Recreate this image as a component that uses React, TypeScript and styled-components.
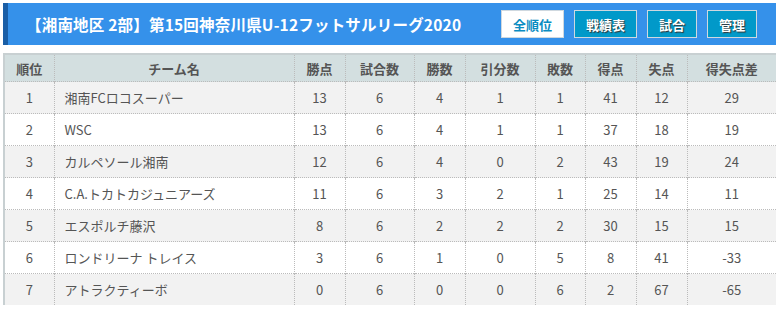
import { createGlobalStyle } from "styled-components";
import styled from "styled-components";

const GlobalStyle = createGlobalStyle`
  body {
    margin: 0;
    background: #fff;
    font-family: "Noto Sans CJK JP", "Noto Sans", sans-serif;
  }
`;

const Page = styled.div`
  padding: 3px 4px 0 3px;
`;

const Bar = styled.div`
  display: flex;
  align-items: center;
  justify-content: space-between;
  height: 42px;
  background: #3591ea;
  border-left: 5px solid #1a5ea6;
  padding: 0 19px 0 18px;
`;

const Title = styled.h1`
  margin: 0;
  color: #fff;
  font-size: 15.5px;
  font-weight: 700;
  letter-spacing: 0.2px;
`;

const Nav = styled.div`
  display: flex;
  gap: 10px;
`;

const NavButton = styled.a<{ $active?: boolean }>`
  display: flex;
  align-items: center;
  justify-content: center;
  height: 28px;
  padding: 0 11px;
  box-sizing: border-box;
  border: 1px solid #cfd8df;
  background: ${({ $active }) => ($active ? "#fff" : "#0199c9")};
  color: ${({ $active }) => ($active ? "#0a8cc2" : "#fff")};
  text-shadow: ${({ $active }) => ($active ? "none" : "1px 1px 1px #333")};
  font-size: 13px;
  font-weight: 700;
  text-decoration: none;
`;

const Table = styled.table`
  margin-top: 8px;
  width: 100%;
  border-collapse: collapse;
  table-layout: fixed;
  border-top: 2px solid #c8d0d2;
  border-left: 2px solid #c8d0d2;
  color: #555;
`;

const Th = styled.th`
  height: 26px;
  background: #d3dfe0;
  font-size: 13px;
  font-weight: 700;
  color: #555;
  border-left: 1px dotted #bbb;
  padding: 0;
  &:first-child {
    border-left: none;
  }
`;

const Tr = styled.tr<{ $odd: boolean }>`
  background: ${({ $odd }) => ($odd ? "#f2f2f2" : "#fff")};
`;

const Td = styled.td<{ $left?: boolean }>`
  height: 31px;
  padding: 0;
  padding-left: ${({ $left }) => ($left ? "10px" : "0")};
  text-align: ${({ $left }) => ($left ? "left" : "center")};
  font-size: 13px;
  color: #555;
  border-left: 1px dotted #bbb;
  border-top: 1px dotted #bbb;
  &:first-child {
    border-left: none;
  }
`;

const widths = [50, 240, 51, 69, 51, 70, 50, 51, 51, 89];
const heads = ["順位", "チーム名", "勝点", "試合数", "勝数", "引分数", "敗数", "得点", "失点", "得失点差"];

const rows: (string | number)[][] = [
  [1, "湘南FCロコスーパー", 13, 6, 4, 1, 1, 41, 12, 29],
  [2, "WSC", 13, 6, 4, 1, 1, 37, 18, 19],
  [3, "カルペソール湘南", 12, 6, 4, 0, 2, 43, 19, 24],
  [4, "C.A.トカトカジュニアーズ", 11, 6, 3, 2, 1, 25, 14, 11],
  [5, "エスポルチ藤沢", 8, 6, 2, 2, 2, 30, 15, 15],
  [6, "ロンドリーナ トレイス", 3, 6, 1, 0, 5, 8, 41, -33],
  [7, "アトラクティーボ", 0, 6, 0, 0, 6, 2, 67, -65],
];

export default function App() {
  return (
    <Page>
      <GlobalStyle />
      <Bar>
        <Title>【湘南地区 2部】第15回神奈川県U-12フットサルリーグ2020</Title>
        <Nav>
          <NavButton $active>全順位</NavButton>
          <NavButton>戦績表</NavButton>
          <NavButton>試合</NavButton>
          <NavButton>管理</NavButton>
        </Nav>
      </Bar>
      <Table>
        <colgroup>
          {widths.map((w, i) => (
            <col key={i} style={{ width: w }} />
          ))}
        </colgroup>
        <thead>
          <tr>
            {heads.map((h) => (
              <Th key={h}>{h}</Th>
            ))}
          </tr>
        </thead>
        <tbody>
          {rows.map((r, i) => (
            <Tr key={i} $odd={i % 2 === 0}>
              {r.map((c, j) => (
                <Td key={j} $left={j === 1}>
                  {c}
                </Td>
              ))}
            </Tr>
          ))}
        </tbody>
      </Table>
    </Page>
  );
}
